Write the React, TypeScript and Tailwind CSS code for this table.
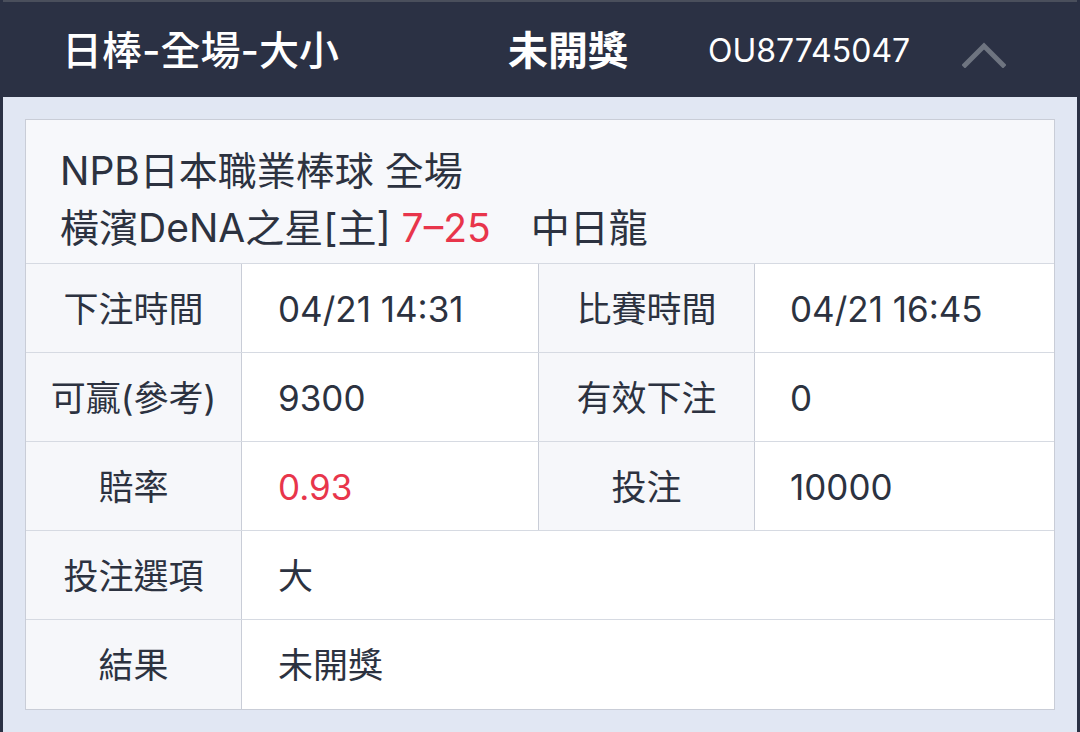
const rows: { a: string; b: string; c?: string; d?: string; red?: boolean }[] = [
    { a: "下注時間", b: "04/21 14:31", c: "比賽時間", d: "04/21 16:45" },
    { a: "可贏(參考)", b: "9300", c: "有效下注", d: "0" },
    { a: "賠率", b: "0.93", c: "投注", d: "10000", red: true },
    { a: "投注選項", b: "大" },
    { a: "結果", b: "未開獎" },
]

const App = () => {
    return (
        <div
            className="w-[1080px] h-[732px] overflow-hidden bg-[#e1e7f3] border-x-[3px] border-[#2b3144] flex flex-col"
            style={{ fontFamily: 'Inter, "Noto Sans CJK TC", sans-serif' }}
        >
            <div className="h-[97px] shrink-0 bg-[#2b3144] border-t-2 border-[#4a4f5c] flex items-center text-white">
                <div className="w-[505px] pl-[59px] text-[40px] font-medium mt-[3px]">日棒-全場-大小</div>
                <div className="w-[200px] text-[40px] font-bold mt-[3px]">未開獎</div>
                <div className="text-[32px] w-[254px] mt-[3px]">OU87745047</div>
                <svg width="44" height="26" viewBox="0 0 44 26" className="mt-[10px]">
                    <polyline points="3,23 22,4 41,23" fill="none" stroke="#6e7480" strokeWidth="5" strokeLinecap="square" />
                </svg>
            </div>

            <div className="mx-[22px] mt-[22px] border border-[#c9cdd7] bg-white">
                <div className="h-[144px] bg-[#f7f8fb] pl-[34px] pt-[22px] text-[39px] text-[#2c3240] leading-[57px] border-b border-[#d6dae2]">
                    <div>NPB日本職業棒球 全場</div>
                    <div>
                        橫濱DeNA之星[主] <span className="text-[#e8354b]">7–25</span>
                        <span className="ml-[40px]">中日龍</span>
                    </div>
                </div>
                {rows.map((r, i) => (
                    <div
                        key={i}
                        className={`grid grid-cols-[216px_297px_216px_1fr] h-[89px] text-[35px] text-[#2c3240] ${i < rows.length - 1 ? "border-b border-[#d6dae2]" : ""}`}
                    >
                        <div className="bg-[#f6f7fa] border-r border-[#c9cdd7] flex items-center justify-center pt-[2px]">{r.a}</div>
                        <div className={`flex items-center pl-[36px] pt-[2px] ${r.c ? "border-r border-[#c9cdd7]" : "col-span-3"} ${r.red ? "text-[#e8354b]" : ""}`}>
                            {r.b}
                        </div>
                        {r.c && (
                            <>
                                <div className="bg-[#f6f7fa] border-r border-[#c9cdd7] flex items-center justify-center pt-[2px]">{r.c}</div>
                                <div className="flex items-center pl-[35px] pt-[2px]">{r.d}</div>
                            </>
                        )}
                    </div>
                ))}
            </div>
        </div>
    )
}

export default App
